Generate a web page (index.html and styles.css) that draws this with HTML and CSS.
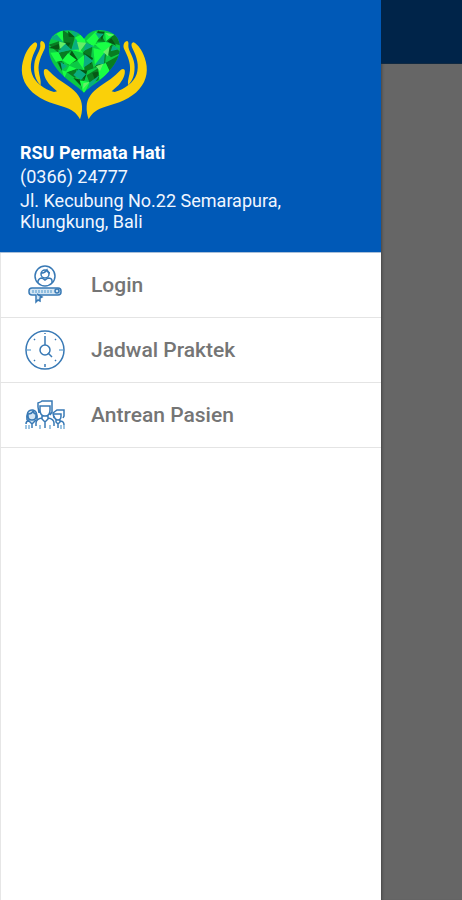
FILE: index.html
```html
<!DOCTYPE html>
<html lang="id">
<head>
<meta charset="utf-8">
<meta name="viewport" content="width=device-width, initial-scale=1">
<title>RSU Permata Hati</title>
<link rel="stylesheet" href="styles.css">
</head>
<body>
<div class="app">
  <aside class="drawer">
    <header class="profile">
      <svg class="logo" viewBox="30 24 390 279" role="img" aria-label="RSU Permata Hati">
        <defs>
          <clipPath id="heart"><path d="M222 57C238 32 262 27 287 32C312 36 330 55 330 82C330 112 311 140 286 166C265 187 243 197 222 218C200 197 179 188 158 166C133 141 116 115 116 83C116 56 133 37 158 32C183 27 208 34 222 57Z"/></clipPath>
          <g id="hand">
            <path d="M75 67C83 68 83 77 78 86C65 111 58 137 66 162C75 188 101 207 132 216L141 214L120 195C108 181 99 164 102 150C106 144 112 147 117 153C132 170 154 184 176 199C201 216 215 235 216 259C217 273 214 287 210 298C200 278 184 267 160 260C123 250 82 236 58 207C34 180 30 146 42 113C50 91 61 75 75 67Z"/>
            <path d="M94 63C103 64 108 75 104 86C93 108 84 128 86 151C87 166 94 180 92 196C76 181 70 157 73 132C76 108 91 92 91 78C91 72 89 67 94 63Z"/>
          </g>
        </defs>
        <g clip-path="url(#heart)">
          <path fill="#0bc944" d="M110 25h225v200H110z"/>
          <path fill="#087c22" d="M158 30l36 23-34 14zM116 74l31-10-2 34zM160 67l34-14-10 36zM145 98l39-9-27 32zM183 90l22 31-32 14zM218 99l31-38-6 52zM243 113l-23-13 4 55 27-10zM265 31l21 35-43-2zM288 64l29-27 14 39zM285 95l20-23 29 27-31 13zM252 143l36-43-3 35zM200 146l29 17-14 43zM170 156l30-10-4 29zM140 123l17 0-1 31zM230 166l45-28-10 43-26 8zM287 128l45-25-31 58z"/>
          <path fill="#055714" d="M174 33l22 19-20-2zM116 84l30-12 8 17zM161 67l21 1-12 20zM174 114l28 5-16-27zM220 98l29 16-7 20zM249 62l25 17-17-3zM263 34l21 1-8 25zM293 65l26 12-15-22zM204 147l28 5-9 28zM146 129l16-1-8 22zM247 158l23-4-15 26zM190 174l25 6-3 17z"/>
          <path fill="#19ff45" d="M125 51l33-21 2 36zM194 53l24-12 9 26-26 20zM229 62l29-28 10 20-19 27zM195 66l24 33-34-9zM121 98l24-2 13 25-20 5zM157 121l17-21 25 19-21 16zM250 84l37 9-32 45zM286 66l20 7-25 23-29-25zM202 121l21-17-1 46zM178 137l22 9-34 12zM263 137l24-8 13 26-31 24zM209 181l30 6-18 36zM285 38l28 5-25 21zM156 151l15 4-8 19z"/>
          <path fill="#09ad80" d="M116 55l24-12 20 24zM182 34l25 2-12 16zM184 90l13-36 16 34zM227 68l25 10-31 15zM146 98l16-31 22 22zM224 103l26 20-30 20zM254 135l31-39-3 35zM190 165l16-18 22 16-15 17zM239 187l31-22-36 50zM308 76l20 11-26 7zM151 125l20 13-15 12zM256 39l26 2-15 15z"/>
          <path fill="#67ed67" d="M201 66l28 2-20 27zM148 65l20 5-19 18zM258 139l22-8-10 22zM279 96l20-17-5 30zM220 190l18-4-19 21zM286 38l28 7-17 4z"/>
        </g>
        <g class="hands">
          <use href="#hand"/>
          <use href="#hand" transform="translate(446 0) scale(-1 1)"/>
        </g>
      </svg>
      <h1 class="name">RSU Permata Hati</h1>
      <p class="phone">(0366) 24777</p>
      <address class="address">Jl. Kecubung No.22 Semarapura, Klungkung, Bali</address>
    </header>
    <nav class="menu">
      <a class="item" href="#login">
        <svg class="icon" viewBox="0 0 42 42" aria-hidden="true">
          <circle cx="21" cy="12" r="10"/>
          <circle cx="21" cy="10" r="4"/>
          <path d="M14 19v-2q1-3 4-3l3 2 3-2q4 0 4 3v2M17 9q4 0 6-3 1 3 3 3"/>
          <rect class="pale" x="5" y="24" width="32" height="7" rx="3"/>
          <path class="soft" d="M9 26v3M12 26v3M15 26v3M18 26v3M21 26v3M24 26v3M27 26v3"/>
          <circle cx="33" cy="27" r="2"/>
          <path class="pale" d="M12 31v7l2-2 2 1v-3l2-1-5-3"/>
        </svg>
        <span>Login</span>
      </a>
      <a class="item" href="#jadwal">
        <svg class="icon" viewBox="0 0 42 42" aria-hidden="true">
          <circle cx="21" cy="21" r="19"/>
          <circle cx="21" cy="21" r="5"/>
          <path d="M21 16V7M24 24l4 4M21 4v1M21 35v3M10 10l1 1M31 11l1-1M10 32l1-1M31 31l1 1"/>
          <path class="soft" d="M3 21h4M35 21h4"/>
        </svg>
        <span>Jadwal Praktek</span>
      </a>
      <a class="item" href="#antrean">
        <svg class="icon" viewBox="0 0 42 42" aria-hidden="true">
          <path d="M15 19l-1-6V9q3-1 4-2h10v11l-2 3M16 12h10v4q0 6-5 6t-5-6zM18 21v4l3 3 3-3v-4M18 24q-6 1-6 5v3M24 24q6 1 6 5v3M21 28v6"/>
          <path class="pale" d="M3 26q-1-10 5-10t5 10M4 20q4 0 5-3 1 3 3 3v2q0 4-4 4t-4-4zM4 26l4 4 4-4M5 26q-3 1-3 4M8 30v4"/>
          <path d="M30 24l-1-5 4-3h7v6l-1 2M30 20h7v2q0 4-3 4t-4-4M32 26v2l2 2 2-2v-2M36 27q4 0 4 4M34 30v4"/>
          <path class="soft" d="M2 31v4M5 31v4M16 31v4M26 31v4M37 31v4M40 31v4"/>
        </svg>
        <span>Antrean Pasien</span>
      </a>
    </nav>
  </aside>
  <div class="backdrop"><div class="toolbar"></div></div>
</div>
</body>
</html>
```
FILE: styles.css
```css
* {
  box-sizing: border-box;
}

body {
  margin: 0;
  font-family: Roboto, "Liberation Sans", sans-serif;
}

.app {
  display: grid;
  grid-template-columns: 82.5% 1fr;
  min-height: 100vh;
}

.drawer {
  background: #fff;
  box-shadow: inset 1px 0 #e6e6e6;
}

.profile {
  padding: 28px 20px 20px;
  background: #0059b7;
  border-bottom: 1px solid #a9bfd8;
  color: #f0f6ff;
}

.logo {
  display: block;
  width: 130px;
  height: 93px;
  margin-bottom: 21px;
}

.hands {
  fill: #fad009;
}

.name,
.phone,
.address {
  margin: 0;
  font-size: 18px;
  line-height: 21px;
}

.name {
  color: #fff;
  font-weight: 700;
}

.phone {
  margin: 3px 0;
}

.address {
  font-style: normal;
}

.item {
  display: flex;
  align-items: center;
  gap: 25px;
  height: 65px;
  padding: 0 24px;
  border-bottom: 1px solid #e4e4e4;
  color: #757575;
  font-size: 21px;
  font-weight: 500;
  text-decoration: none;
}

.icon {
  flex: none;
  width: 42px;
  height: 42px;
  fill: none;
  stroke: #3879b5;
  stroke-width: 1.5px;
}

.pale {
  fill: #d3e5f3;
}

.soft {
  stroke: #7eb3da;
}

.backdrop {
  background: #666;
  box-shadow: inset 3px 0 3px -2px #444;
}

.toolbar {
  height: 64px;
  background: #002449;
  border-bottom: 1px solid #102941;
}
```
